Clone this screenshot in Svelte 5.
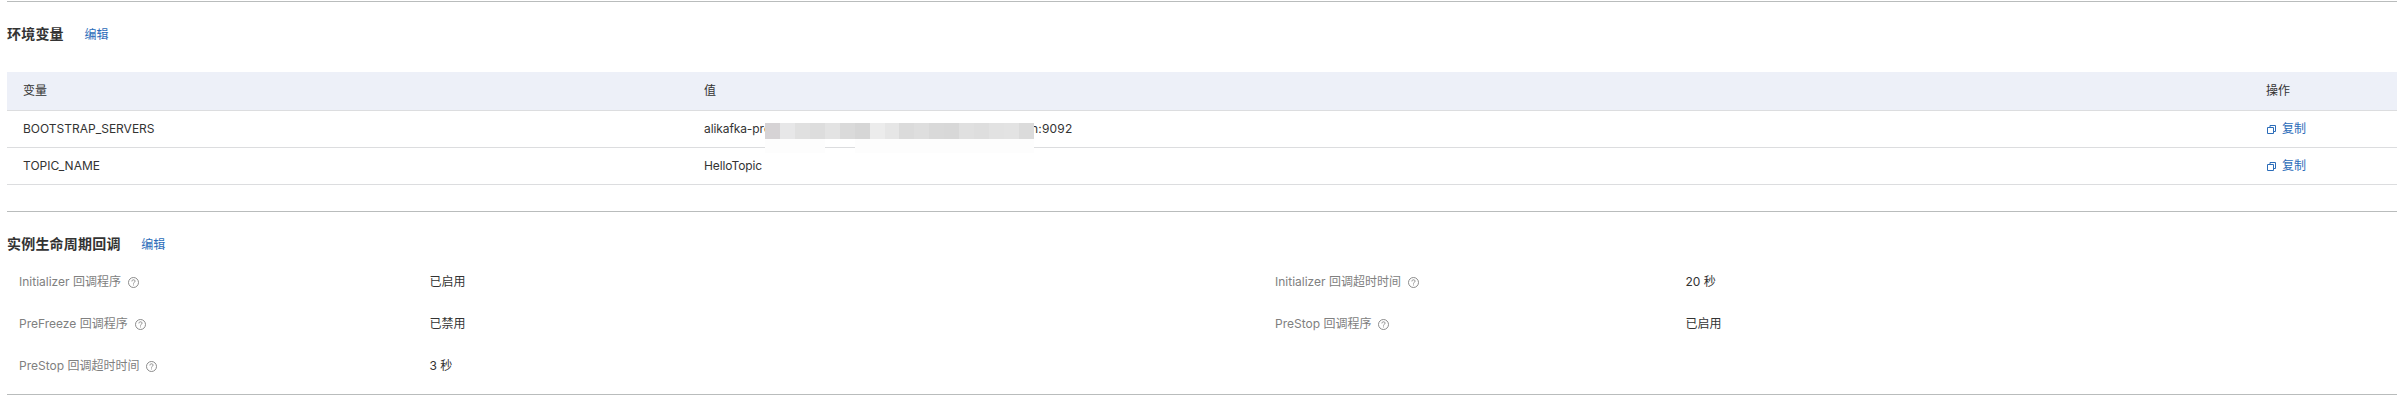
<script>
  const variables = [
    { name: 'BOOTSTRAP_SERVERS', masked: true },
    { name: 'TOPIC_NAME', value: 'HelloTopic' }
  ];
  const tiles = ['#d6d3d5', '#e7e7e8', '#e0e0e0', '#dddddd', '#e3e3e3', '#dadada', '#d6d6d6', '#ececec', '#e6e6e6', '#dbdbdb', '#dedede', '#d9d9d9', '#d8d8d8', '#e0e0e0', '#dedede', '#e2e2e2', '#e3e3e3', '#dbdbdb'];
  const hooks = [
    { label: 'Initializer 回调程序', value: '已启用' },
    { label: 'Initializer 回调超时时间', value: '20 秒' },
    { label: 'PreFreeze 回调程序', value: '已禁用' },
    { label: 'PreStop 回调程序', value: '已启用' },
    { label: 'PreStop 回调超时时间', value: '3 秒' }
  ];
</script>

<main>
  <section class="env">
    <header>
      <h2>环境变量</h2>
      <a class="edit">编辑</a>
    </header>
    <div class="table">
      <div class="row head">
        <span>变量</span><span>值</span><span>操作</span>
      </div>
      {#each variables as v}
        <div class="row">
          <span>{v.name}</span>
          {#if v.masked}
            <span class="masked">
              <span class="start">alikafka-pr<span class="edge">e</span></span>
              <span class="mosaic">
                <span class="tiles">
                  {#each tiles as c}<i style:background={c}></i>{/each}
                </span>
                <span class="haze"><i></i><i></i></span>
              </span>
              <span class="end">n:9092</span>
            </span>
          {:else}
            <span class="value">{v.value}</span>
          {/if}
          <a class="copy">
            <svg width="10" height="10" viewBox="0 0 10 10" fill="none" stroke="currentColor">
              <path d="M.5 3.5h6v6h-6zM3 3.5v-2h5.5v6h-2" />
            </svg>
            复制
          </a>
        </div>
      {/each}
    </div>
  </section>

  <section class="life">
    <header>
      <h2>实例生命周期回调</h2>
      <a class="edit">编辑</a>
    </header>
    <dl>
      {#each hooks as h}
        <div class="item">
          <dt>
            {h.label}
            <svg width="11" height="11" viewBox="0 0 11 11" fill="none" stroke="currentColor" stroke-width=".9">
              <circle cx="5.5" cy="5.5" r="5" />
              <path d="M3.9 4.4C3.9 3.4 4.6 2.8 5.5 2.8S7.1 3.4 7.1 4.2C7.1 5.2 5.5 5.2 5.5 6.6M5.5 7.5V8.4" />
            </svg>
          </dt>
          <dd>{h.value}</dd>
        </div>
      {/each}
    </dl>
  </section>
</main>

<style>
  :global(body) {
    background: #fff;
  }
  main {
    height: 407px;
    box-sizing: border-box;
    padding: 1px 0 0 7px;
    overflow: hidden;
    font: 12px/18px Inter, "Noto Sans CJK SC", sans-serif;
    color: #333;
  }
  section {
    box-sizing: border-box;
    border-top: 1px solid #b9bcbc;
  }
  .env {
    height: 210px;
  }
  .life {
    height: 184px;
    border-bottom: 1px solid #b9bcbc;
  }
  header {
    display: flex;
    align-items: center;
    gap: 20.6px;
    height: 20px;
    padding-top: 22px;
  }
  h2 {
    margin: 0;
    font-size: 14px;
    line-height: 20px;
    font-weight: 600;
    letter-spacing: 0.2px;
  }
  a {
    color: #2b6cb9;
  }
  .edit {
    padding-top: 1px;
  }
  .table {
    margin-top: 28px;
  }
  .row {
    display: grid;
    grid-template-columns: 681px 1562px 1fr;
    align-items: center;
    height: 36px;
    padding-left: 16px;
    border-bottom: 1px solid #dcdddf;
    white-space: nowrap;
  }
  .row > span {
    position: relative;
  }
  .head {
    height: 38px;
    background: #edf0f8;
  }
  .value {
    letter-spacing: -0.1px;
  }
  .masked {
    display: flex;
    height: 36px;
    line-height: 36px;
    z-index: 1;
  }
  .start {
    width: 61px;
    letter-spacing: -0.1px;
  }
  .edge {
    display: inline-block;
    width: 3px;
    overflow: visible;
  }
  .mosaic {
    position: relative;
    width: 269px;
    height: 42px;
    padding-top: 12px;
    box-sizing: border-box;
    z-index: 1;
  }
  .tiles {
    display: flex;
    height: 16px;
  }
  .tiles i {
    flex: 1;
  }
  .haze {
    display: flex;
    height: 14px;
    gap: 30px;
  }
  .haze i {
    width: 60px;
    background: #fdfdfd;
  }
  .haze i:last-child {
    flex: 1;
  }
  .end {
    margin-left: -3px;
    letter-spacing: 0.2px;
  }
  .copy {
    display: flex;
    align-items: center;
    gap: 5px;
    padding-left: 1px;
  }
  dl {
    display: grid;
    grid-template-columns: 1256px 1fr;
    grid-auto-rows: 42px;
    margin: 19px 0 0 12px;
  }
  .item {
    display: grid;
    grid-template-columns: 410.5px 1fr;
    align-items: start;
  }
  dt {
    display: flex;
    align-items: center;
    gap: 7px;
    color: #808080;
  }
  dd {
    margin: 0;
  }
</style>
